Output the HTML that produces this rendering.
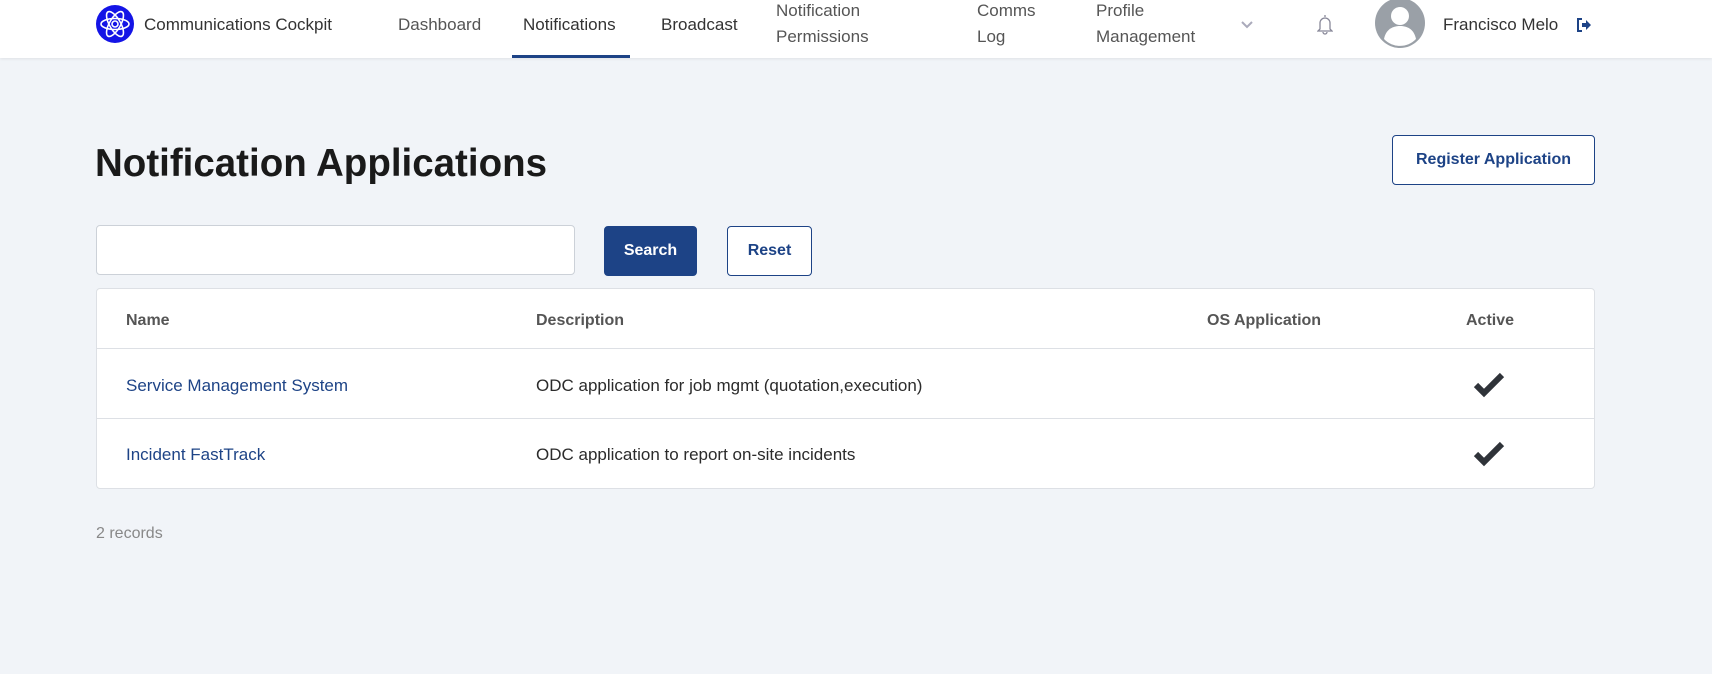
<!DOCTYPE html>
<html><head><meta charset="utf-8">
<style>
*{box-sizing:border-box;margin:0;padding:0}
body{width:1712px;height:674px;background:#f1f4f8;font-family:"Liberation Sans",sans-serif;color:#2b2b2b;position:relative;overflow:hidden}
.hdr{position:absolute;left:0;top:0;width:1712px;height:58px;background:#fff;box-shadow:0 1px 3px rgba(0,0,0,.08)}
.a{position:absolute;white-space:nowrap}
.nav{font-size:17px;color:#555}
.nav2{font-size:17px;color:#555;line-height:26px}
.btn{position:absolute;border:1px solid #1d4386;border-radius:4px;font-weight:bold;font-size:16px;display:flex;align-items:center;justify-content:center}
.tbl{position:absolute;left:96px;top:288px;width:1499px;height:201px;background:#fff;border:1px solid #dde0e5;border-radius:4px}
.row{position:absolute;left:0;width:100%;border-top:1px solid #dde0e5}
.th{font-weight:bold;color:#555;font-size:16px}
.td{font-size:17px;color:#2b2b2b}
.lnk{color:#1d4386}
</style></head><body>
<div class="hdr">
<svg class="a" style="left:96px;top:5px" width="38" height="38" viewBox="0 0 38 38"><circle cx="19" cy="19" r="19" fill="#1414e6"/><g fill="none" stroke="#fff" stroke-width="1.6"><ellipse cx="19" cy="19" rx="14" ry="5.5"/><ellipse cx="19" cy="19" rx="14" ry="5.5" transform="rotate(60 19 19)"/><ellipse cx="19" cy="19" rx="14" ry="5.5" transform="rotate(-60 19 19)"/><circle cx="19" cy="19" r="3"/></g></svg>
<div class="a" style="left:144px;top:15px;font-size:17px;color:#333">Communications Cockpit</div>
<div class="a nav" style="left:398px;top:15px">Dashboard</div>
<div class="a nav" style="left:523px;top:15px;color:#333">Notifications</div>
<div class="a" style="left:512px;top:55px;width:118px;height:3px;background:#1d4386"></div>
<div class="a nav" style="left:661px;top:15px;color:#333">Broadcast</div>
<div class="a nav2" style="left:776px;top:-2px">Notification<br>Permissions</div>
<div class="a nav2" style="left:977px;top:-2px">Comms<br>Log</div>
<div class="a nav2" style="left:1096px;top:-2px">Profile<br>Management</div>
<svg class="a" style="left:1240px;top:20px" width="14" height="10" viewBox="0 0 14 10"><path d="M2 2l5 5 5-5" fill="none" stroke="#aab" stroke-width="2"/></svg>
<svg class="a" style="left:1317px;top:13px" width="16" height="22" viewBox="0 0 16 22"><path d="M8 2v2M3 16V10a5 5 0 0 1 10 0v6l2 2H1z M6 19a2 2 0 0 0 4 0" fill="none" stroke="#889" stroke-width="1.3"/></svg>
<svg class="a" style="left:1374px;top:-3px" width="52" height="52" viewBox="0 0 52 52"><circle cx="26" cy="26" r="25" fill="#9aa0a7"/><circle cx="26" cy="19" r="9" fill="#fff"/><path d="M10 42c2-10 9-13 16-13s14 3 16 13a22 22 0 0 1-32 0z" fill="#fff"/></svg>
<div class="a" style="left:1443px;top:15px;font-size:17px;color:#333">Francisco Melo</div>
<svg class="a" style="left:1576px;top:18px" width="16" height="14" viewBox="0 0 16 14"><path d="M6 1H2v12h4" fill="none" stroke="#1d4386" stroke-width="2"/><path d="M6 5h4V2l5 5-5 5V9H6z" fill="#1d4386"/></svg>
</div>
<div class="a" style="left:95px;top:142px;font-size:38.5px;font-weight:bold;color:#1a1a1a">Notification Applications</div>
<div class="btn" style="left:1392px;top:135px;width:203px;height:50px;background:#fff;color:#1d4386">Register Application</div>
<div class="a" style="left:96px;top:225px;width:479px;height:50px;background:#fff;border:1px solid #ccd1d8;border-radius:4px"></div>
<div class="btn" style="left:604px;top:226px;width:93px;height:50px;background:#1d4386;color:#fff">Search</div>
<div class="btn" style="left:727px;top:226px;width:85px;height:50px;background:#fff;color:#1d4386">Reset</div>
<div class="tbl">
<div class="a th" style="left:29px;top:23px">Name</div>
<div class="a th" style="left:439px;top:23px">Description</div>
<div class="a th" style="left:1110px;top:23px">OS Application</div>
<div class="a th" style="left:1369px;top:23px">Active</div>
<div class="row" style="top:59px;height:65px">
<div class="a td lnk" style="left:29px;top:27px">Service Management System</div>
<div class="a td" style="left:439px;top:27px">ODC application for job mgmt (quotation,execution)</div>
<svg class="a" style="left:1376px;top:23px" width="32" height="26" viewBox="0 0 32 26"><path d="M3 13l8 8L29 3" fill="none" stroke="#2f3339" stroke-width="6"/></svg>
</div>
<div class="row" style="top:129px;height:70px">
<div class="a td lnk" style="left:29px;top:26px">Incident FastTrack</div>
<div class="a td" style="left:439px;top:26px">ODC application to report on-site incidents</div>
<svg class="a" style="left:1376px;top:22px" width="32" height="26" viewBox="0 0 32 26"><path d="M3 13l8 8L29 3" fill="none" stroke="#2f3339" stroke-width="6"/></svg>
</div>
</div>
<div class="a" style="left:96px;top:525px;font-size:16px;color:#888">2 records</div>
</body></html>
